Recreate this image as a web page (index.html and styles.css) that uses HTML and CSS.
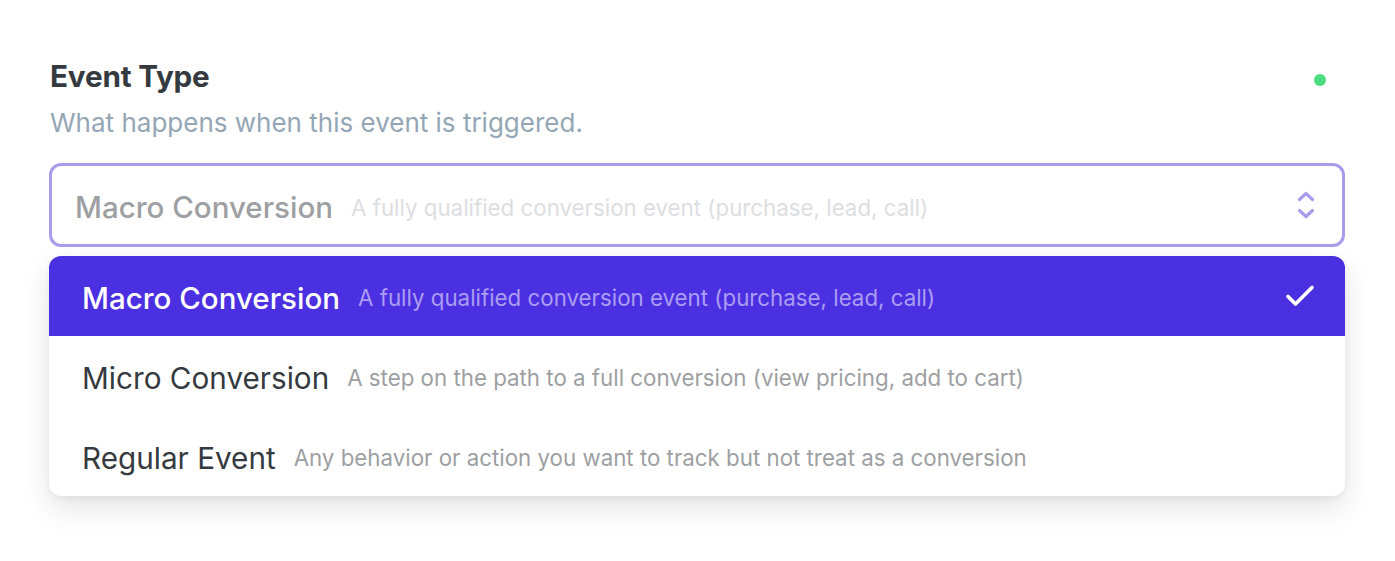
FILE: index.html
```html
<!DOCTYPE html>
<html>
<head>
<meta charset="utf-8">
<link rel="stylesheet" href="styles.css">
</head>
<body>
<div class="field">
  <div class="header">
    <div class="titles">
      <div class="title">Event Type</div>
      <div class="subtitle">What happens when this event is triggered.</div>
    </div>
    <span class="dot"></span>
  </div>
  <div class="select">
    <span class="label">Macro Conversion</span>
    <span class="desc">A fully qualified conversion event (purchase, lead, call)</span>
    <svg class="chev" width="20" height="32" viewBox="0 0 20 32" fill="none" stroke="#a99cec" stroke-width="3.2" stroke-linecap="round" stroke-linejoin="round">
      <path d="M3.5 10.5 L10 4.5 L16.5 10.5"/>
      <path d="M3.5 21.5 L10 27.5 L16.5 21.5"/>
    </svg>
  </div>
  <div class="menu">
    <div class="option active">
      <span class="label">Macro Conversion</span>
      <span class="desc">A fully qualified conversion event (purchase, lead, call)</span>
      <svg class="check" width="30" height="24" viewBox="0 0 30 24" fill="none" stroke="#ffffff" stroke-width="3.6" stroke-linecap="round" stroke-linejoin="round">
        <path d="M3 12.5 L10.5 20 L27 3.5"/>
      </svg>
    </div>
    <div class="option">
      <span class="label">Micro Conversion</span>
      <span class="desc">A step on the path to a full conversion (view pricing, add to cart)</span>
    </div>
    <div class="option">
      <span class="label">Regular Event</span>
      <span class="desc">Any behavior or action you want to track but not treat as a conversion</span>
    </div>
  </div>
</div>
</body>
</html>
```
FILE: styles.css
```css
html, body {
  margin: 0;
  padding: 0;
  background: #ffffff;
}
body {
  font-family: Inter, "Noto Sans", sans-serif;
  width: 1395px;
  height: 561px;
  overflow: hidden;
}
.field {
  padding: 56px 50px 0 49px;
}
.header {
  display: flex;
  justify-content: space-between;
  align-items: flex-start;
  padding-left: 1px;
}
.title {
  font-size: 29.7px;
  font-weight: 650;
  color: #353a40;
  line-height: 40px;
  letter-spacing: -0.2px;
}
.subtitle {
  font-size: 26px;
  color: #94a6b5;
  line-height: 36px;
  margin-top: 9px;
}
.dot {
  width: 12px;
  height: 12px;
  border-radius: 50%;
  background: #4ade80;
  margin-top: 18px;
  margin-right: 19px;
}
.select {
  margin-top: 22px;
  box-sizing: border-box;
  height: 84px;
  border: 3px solid #a99cec;
  border-radius: 12px;
  display: flex;
  align-items: center;
  padding: 4px 26px 0 23px;
}
.select .label {
  font-size: 29.5px;
  font-weight: 500;
  color: #9d9fa2;
}
.select .desc {
  font-size: 22.3px;
  color: #dcdee1;
  margin-left: 18px;
}
.chev {
  margin-left: auto;
  margin-top: -4px;
}
.menu {
  margin-top: 9px;
  border-radius: 12px;
  background: #fff;
  box-shadow: 0 12px 30px rgba(0,0,0,0.11), 0 2px 6px rgba(0,0,0,0.06);
  overflow: hidden;
}
.option {
  box-sizing: border-box;
  height: 80px;
  display: flex;
  align-items: center;
  padding: 3px 30px 0 33px;
}
.option .label {
  font-size: 29.7px;
  color: #353a40;
}
.option .desc {
  font-size: 22.3px;
  color: #9d9fa2;
  margin-left: 18px;
}
.option.active {
  background: #4b30e2;
}
.option.active .label {
  color: #ffffff;
  font-weight: 500;
  font-size: 29.5px;
}
.option.active .desc {
  color: #ab9df2;
}
.check {
  margin-left: auto;
  margin-top: -3px;
}
```
